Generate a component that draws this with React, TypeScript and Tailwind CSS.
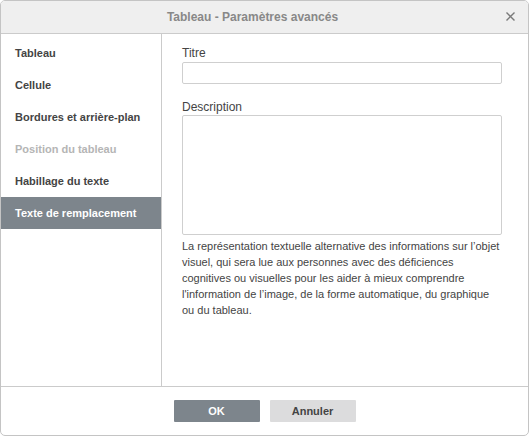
import React from "react";

const items = [
  { label: "Tableau", state: "normal" },
  { label: "Cellule", state: "normal" },
  { label: "Bordures et arrière-plan", state: "normal" },
  { label: "Position du tableau", state: "disabled" },
  { label: "Habillage du texte", state: "normal" },
  { label: "Texte de remplacement", state: "active" },
];

export default function App() {
  return (
    <div
      className="w-[529px] h-[436px] flex flex-col bg-white border border-[#c4c4c4] rounded-[5px] overflow-hidden text-[#444444]"
      style={{ fontFamily: '"Liberation Sans", Arial, sans-serif' }}
    >
      <div className="relative h-[33px] shrink-0 bg-[#efefef] border-b border-[#cbcbcb] flex items-center justify-center pr-[24px]">
        <span className="text-[12px] font-bold text-[#888888]">Tableau - Paramètres avancés</span>
        <div className="absolute right-[13px] top-[11px] w-[9px] h-[9px]">
          <svg width="9" height="9" viewBox="0 0 9 9">
            <path d="M0.5 0.5 L8.5 8.5 M8.5 0.5 L0.5 8.5" stroke="#7a7a7a" strokeWidth="1.4" />
          </svg>
        </div>
      </div>
      <div className="flex flex-1 min-h-0">
        <div className="w-[161px] shrink-0 border-r border-[#cbcbcb] pt-[3px]">
          {items.map((it) => (
            <div
              key={it.label}
              className={
                it.state === "active"
                  ? "h-[32px] flex items-center pl-[14px] text-[11px] font-bold bg-[#7d858c] text-white"
                  : it.state === "disabled"
                  ? "h-[32px] flex items-center pl-[14px] text-[11px] font-bold text-[#b5b5b5]"
                  : "h-[32px] flex items-center pl-[14px] text-[11px] font-bold text-[#444444]"
              }
            >
              {it.label}
            </div>
          ))}
        </div>
        <div className="flex-1 pl-[20px] pt-[12px]">
          <div className="text-[12px] leading-[14px] mb-[2px]">Titre</div>
          <div className="w-[320px] h-[22px] border border-[#cfcfcf] rounded-[2px]" />
          <div className="text-[12px] leading-[14px] mt-[16px] mb-[1px]">Description</div>
          <div className="w-[320px] h-[120px] border border-[#cfcfcf] rounded-[2px]" />
          <p className="w-[322px] mt-[3px] text-[11px] leading-[16px] text-[#444444]">
            La représentation textuelle alternative des informations sur l’objet visuel, qui sera lue aux personnes avec des déficiences cognitives ou visuelles pour les aider à mieux comprendre l'information de l’image, de la forme automatique, du graphique ou du tableau.
          </p>
        </div>
      </div>
      <div className="h-[49px] shrink-0 border-t border-[#cbcbcb] flex items-center justify-center gap-[10px]">
        <button className="w-[86px] h-[22px] bg-[#7d858c] text-white text-[11px] font-bold rounded-[1px]">OK</button>
        <button className="w-[86px] h-[22px] bg-[#dcdcdd] text-[#444444] text-[11px] font-bold rounded-[1px]">Annuler</button>
      </div>
    </div>
  );
}
